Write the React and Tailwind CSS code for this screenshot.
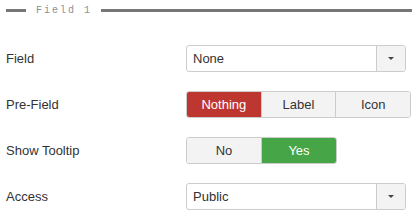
const sans = { fontFamily: '"Liberation Sans", Arial, sans-serif' };

function Select({ value }) {
  return (
    <div className="flex h-[27px] w-[220px] rounded-[3px] border border-[#ccc] bg-white overflow-hidden">
      <div className="flex-1 flex items-center pl-[6px] text-[13px] text-[#333]">{value}</div>
      <div className="w-[29px] flex items-center justify-center border-l border-[#ccc] bg-[#f3f3f3]">
        <span className="block w-0 h-0 border-l-[3px] border-r-[3px] border-t-[3px] border-l-transparent border-r-transparent border-t-[#444]" />
      </div>
    </div>
  );
}

function Group({ options, active, activeCls, width }) {
  return (
    <div className={`flex h-[27px] ${width} rounded-[3px] border border-[#ccc] overflow-hidden`}>
      {options.map((opt, i) => (
        <div
          key={opt}
          className={`flex-1 flex items-center justify-center text-[13px] ${i > 0 ? "border-l border-[#ccc]" : ""} ${
            opt === active ? activeCls : "bg-[#f3f3f3] text-[#333]"
          }`}
        >
          {opt}
        </div>
      ))}
    </div>
  );
}

function Row({ label, children }) {
  return (
    <div className="flex items-center h-[27px]">
      <div className="w-[180px] text-[13px] text-[#333]">{label}</div>
      {children}
    </div>
  );
}

export default function App() {
  return (
    <div className="w-[418px] h-[219px] bg-white pl-[6px]" style={sans}>
      {/* legend */}
      <div className="flex items-center h-[21px] pr-[6px]">
        <div className="w-[20px] h-[3px] bg-[#777]" />
        <span
          className="ml-[10px] mr-[9px] text-[10px] tracking-[2px] text-[#8a8f99]"
          style={{ fontFamily: '"Liberation Mono", "Courier New", monospace' }}
        >
          Field 1
        </span>
        <div className="flex-1 h-[3px] bg-[#777]" />
      </div>

      <div className="flex flex-col gap-[19px] mt-[24px]">
        <Row label="Field">
          <Select value="None" />
        </Row>
        <Row label="Pre-Field">
          <Group
            options={["Nothing", "Label", "Icon"]}
            active="Nothing"
            activeCls="bg-[#bd362f] text-white"
            width="w-[225px]"
          />
        </Row>
        <Row label="Show Tooltip">
          <Group options={["No", "Yes"]} active="Yes" activeCls="bg-[#46a546] text-white" width="w-[151px]" />
        </Row>
        <Row label="Access">
          <Select value="Public" />
        </Row>
      </div>
    </div>
  );
}
